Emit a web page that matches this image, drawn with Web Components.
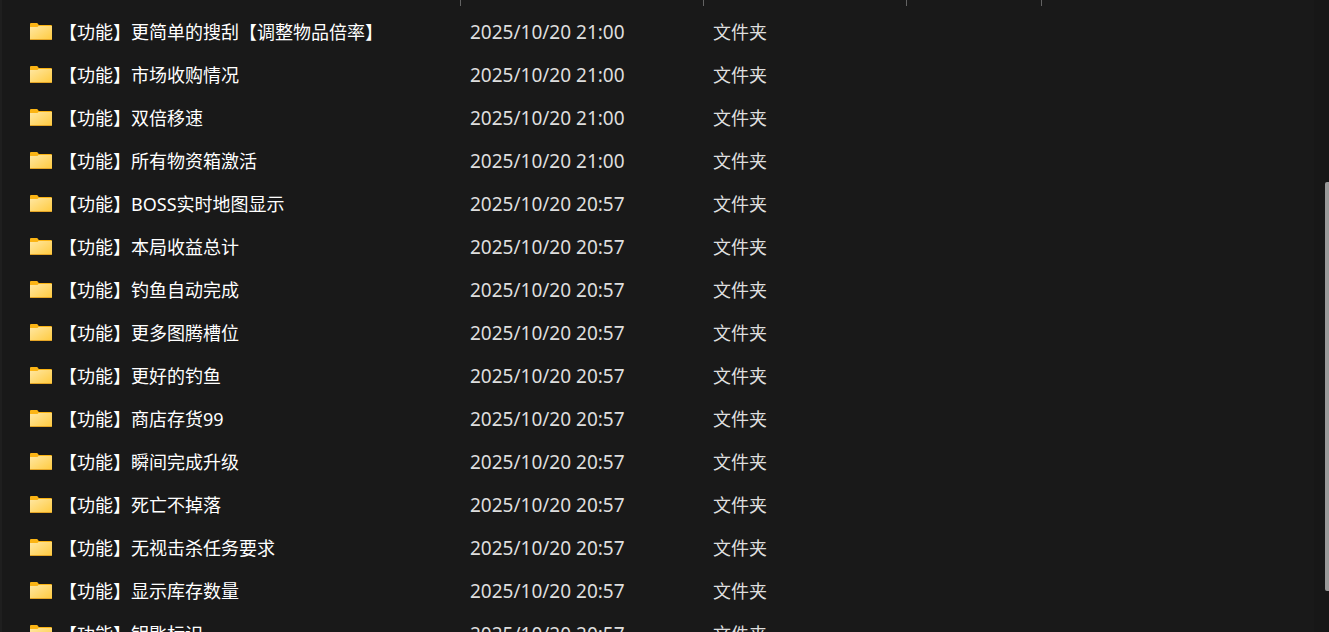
<!DOCTYPE html>
<html lang="zh-CN">
<head>
<meta charset="utf-8">
<meta name="viewport" content="width=device-width, initial-scale=1">
<title>文件夹</title>
<style>
  html, body { margin: 0; height: 100%; background: #191919; }
  body { overflow: hidden; font-family: "Noto Sans", "Noto Sans CJK SC", sans-serif; }
</style>
</head>
<body>
<explorer-pane>
  <file-list></file-list>
  <scroll-rail slot="rail"></scroll-rail>
</explorer-pane>

<template id="pane-template">
  <style>
    :host { display: flex; height: 100vh; overflow: hidden; box-sizing: border-box; border-left: 2px solid #1f1f1f; background: #191919; }
    main { flex: 1; min-width: 0; overflow: hidden; }
  </style>
  <main><slot></slot></main>
  <slot name="rail"></slot>
</template>

<template id="folder-template">
  <style>
    :host { display: block; width: 22px; height: 18px; flex: none; }
    svg { display: block; }
  </style>
  <svg width="22" height="18" viewBox="0 0 22 18" aria-hidden="true">
    <defs>
      <linearGradient id="front" x1="0" y1="0" x2="1" y2="1">
        <stop offset="0" stop-color="#ffe7a2"/>
        <stop offset="1" stop-color="#ffca3e"/>
      </linearGradient>
    </defs>
    <path d="M0 1Q0 0 1 0H7Q7.500 0 8 1L8.800 2H21Q22 2 22 3V12H0Z" fill="#fbb414"/>
    <path d="M0 4H7.500L8.500 3H22V16Q22 17 21 17H1Q0 17 0 16Z" fill="url(#front)"/>
    <path d="M0 16H22Q22 17 21 17H1Q0 17 0 16Z" fill="#e5a526"/>
  </svg>
</template>

<template id="list-template">
  <style>
    :host { display: block; }
    table { width: 100%; table-layout: fixed; border-collapse: separate; border-spacing: 0; }
    .name { width: 459px; }
    .date { width: 243px; }
    .type { width: 203px; }
    .size { width: 135px; }
    th { height: 6px; padding: 0; box-sizing: border-box; border-right: 1px solid #636363; }
    th:last-child { border-right: 0; }
    tbody::before { content: ""; display: block; height: 4px; }
    td { height: 43px; padding: 0 0 0 9px; box-sizing: border-box; vertical-align: middle; white-space: nowrap; color: #dedede; font-size: 18px; line-height: 24px; }
    td:first-child { padding-left: 28px; color: #fff; }
    time { font-size: 19px; }
    .entry { display: flex; align-items: center; gap: 7px; }
  </style>
  <table aria-label="文件夹">
    <colgroup><col class="name"><col class="date"><col class="type"><col class="size"><col></colgroup>
    <thead><tr><th></th><th></th><th></th><th></th><th></th></tr></thead>
    <tbody></tbody>
  </table>
</template>

<template id="rail-template">
  <style>
    :host { display: flex; flex-direction: column; align-items: flex-end; width: 15px; flex: none; background: #171717; }
    .before { flex: 182; }
    .thumb { flex: 409; width: 4px; border-radius: 2px 0 0 2px; background: #9a9a9a; }
    .after { flex: 41; }
  </style>
  <div class="before"></div><div class="thumb"></div><div class="after"></div>
</template>

<script>
  const stamp = (host, id) => {
    const root = host.attachShadow({ mode: "open" });
    root.append(document.getElementById(id).content.cloneNode(true));
    return root;
  };

  class FolderIcon extends HTMLElement {
    constructor() { super(); stamp(this, "folder-template"); }
  }
  class ExplorerPane extends HTMLElement {
    constructor() { super(); stamp(this, "pane-template"); }
  }
  class ScrollRail extends HTMLElement {
    constructor() { super(); stamp(this, "rail-template"); }
  }

  const entries = [
    ["更简单的搜刮【调整物品倍率】", "21:00"],
    ["市场收购情况", "21:00"],
    ["双倍移速", "21:00"],
    ["所有物资箱激活", "21:00"],
    ["BOSS实时地图显示", "20:57"],
    ["本局收益总计", "20:57"],
    ["钓鱼自动完成", "20:57"],
    ["更多图腾槽位", "20:57"],
    ["更好的钓鱼", "20:57"],
    ["商店存货99", "20:57"],
    ["瞬间完成升级", "20:57"],
    ["死亡不掉落", "20:57"],
    ["无视击杀任务要求", "20:57"],
    ["显示库存数量", "20:57"],
    ["钥匙标识", "20:57"]
  ];

  class FileList extends HTMLElement {
    constructor() {
      super();
      const body = stamp(this, "list-template").querySelector("tbody");
      for (const [name, time] of entries) {
        const row = body.insertRow();
        row.innerHTML = `<td><div class="entry"><folder-icon></folder-icon><span>【功能】${name}</span></div></td>
          <td><time>2025/10/20 ${time}</time></td><td>文件夹</td><td></td><td></td>`;
      }
    }
  }

  customElements.define("folder-icon", FolderIcon);
  customElements.define("file-list", FileList);
  customElements.define("scroll-rail", ScrollRail);
  customElements.define("explorer-pane", ExplorerPane);
</script>
</body>
</html>
